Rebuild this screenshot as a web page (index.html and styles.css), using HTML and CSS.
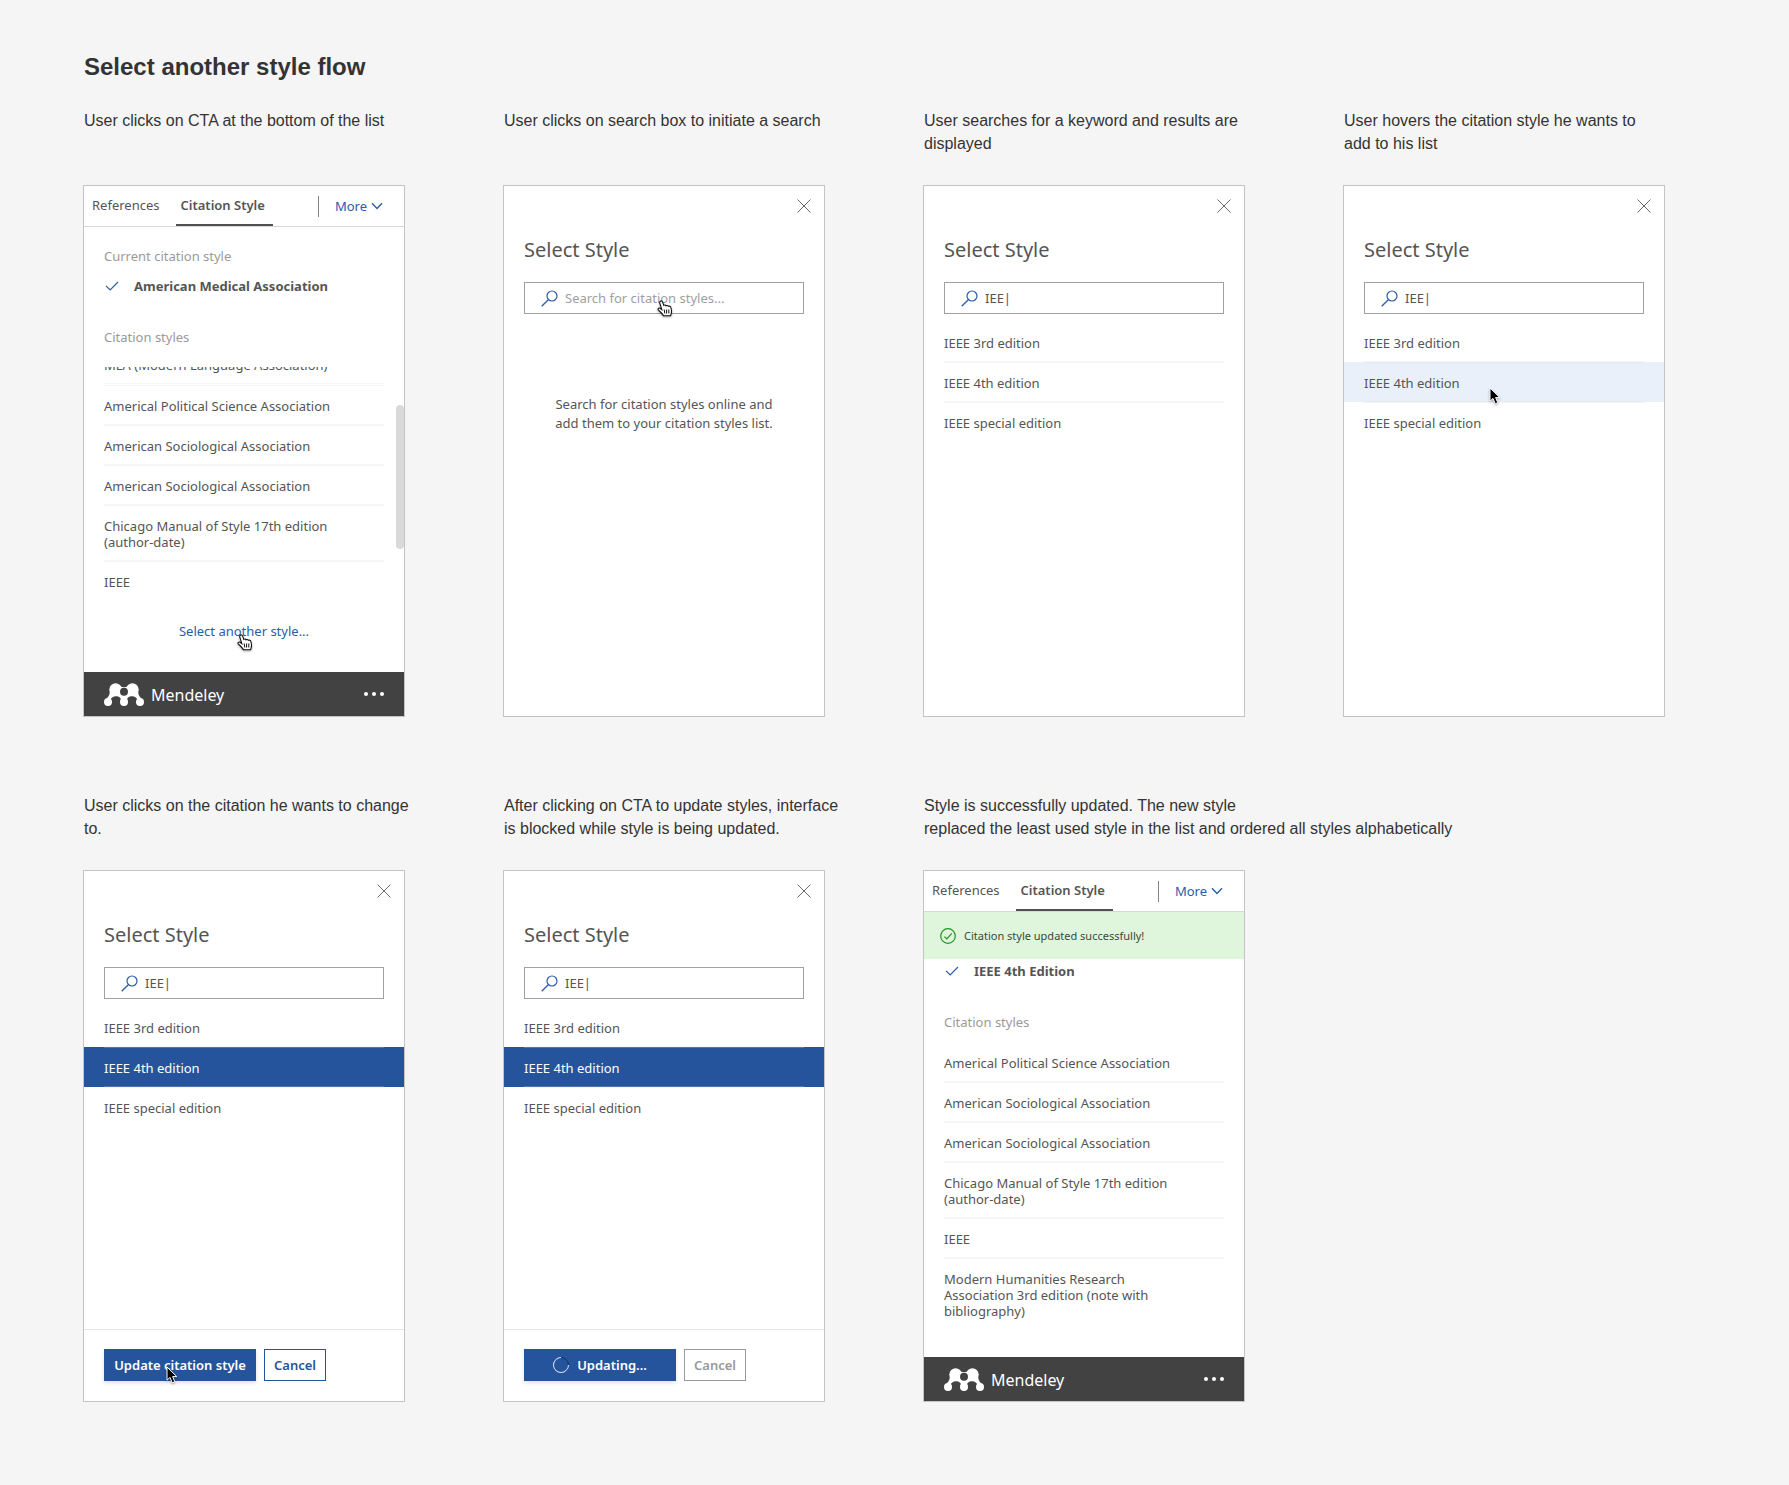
FILE: index.html
```html
<!DOCTYPE html>
<html lang="en">
<head>
<meta charset="utf-8">
<meta name="viewport" content="width=device-width, initial-scale=1">
<title>Select another style flow</title>
<link rel="stylesheet" href="styles.css">
</head>
<body>
<svg class="sprite" aria-hidden="true">
  <symbol id="i-close" viewBox="0 0 14 14"><path d="M0.5 0.5L13.5 13.5M13.5 0.5L0.5 13.5" fill="none" stroke="#6b6b6b"/></symbol>
  <symbol id="i-search" viewBox="0 0 17 17"><circle cx="11" cy="6" r="5" fill="none" stroke="#2a5caa" stroke-width="1.2"/><path d="M7.3 9.7L0.7 16.2" fill="none" stroke="#2a5caa" stroke-width="1.3"/></symbol>
  <symbol id="i-check" viewBox="0 0 14 10"><path d="M1 4.8L5.2 9L13 1" fill="none" stroke="#2a5caa" stroke-width="1.2"/></symbol>
  <symbol id="i-chevron" viewBox="0 0 12 8"><path d="M1 1.2L6 6.4L11 1.2" fill="none" stroke="#2a5caa" stroke-width="1.4"/></symbol>
  <symbol id="i-success" viewBox="0 0 16 16"><circle cx="8" cy="8" r="7.3" fill="none" stroke="#1f9522" stroke-width="1.2"/><path d="M4.4 8.6L6.8 10.8L11.8 5.4" fill="none" stroke="#1f9522" stroke-width="1.2"/></symbol>
  <symbol id="i-dots" viewBox="0 0 20 4"><g fill="#fff"><circle cx="2" cy="2" r="2"/><circle cx="10" cy="2" r="2"/><circle cx="18" cy="2" r="2"/></g></symbol>
  <symbol id="i-logo" viewBox="0 0 40 23">
    <g fill="#fff">
      <circle cx="11.6" cy="6.4" r="6.2"/><circle cx="28.4" cy="6.4" r="6.2"/>
      <circle cx="4" cy="19" r="4"/><circle cx="20" cy="19" r="4"/><circle cx="36" cy="19" r="4"/>
      <path d="M5.6 6C6.4 10.5 5 13.5 2.6 15.4L6.6 16.8C7.4 14.4 9.4 13.2 11.8 13.2C15.2 13.2 17.6 14.8 16.6 18L23.4 18C22.4 14.8 24.8 13.2 28.2 13.2C30.6 13.2 32.6 14.4 33.4 16.8L37.4 15.4C35 13.5 33.6 10.5 34.4 6L26 2.4Q20 6 14 2.4Z"/>
    </g>
    <circle cx="20" cy="8.8" r="4" fill="#424242"/>
  </symbol>
  <symbol id="i-arrow" viewBox="0 0 12 18"><path d="M1 1V14.2L4 11.4L6.2 16.8L8.8 15.7L6.6 10.6H10.8Z" fill="#000" stroke="#fff"/></symbol>
  <symbol id="i-hand" viewBox="0 0 16 17"><path d="M3.4 1.2C4.2 0.6 5.2 1 5.5 1.9L6.8 5.4C7.6 4.8 8.6 5 9 5.8C9.8 5.2 10.9 5.4 11.3 6.3C12.3 5.8 13.5 6.2 13.8 7.4C14.5 9.6 15 11.2 14.2 13.4L13.6 15.8H6.4C5.6 13.6 3 11.8 1.3 9.8C0.4 8.6 1.8 7.5 3 8.3L4.8 9.6L2.8 3.2C2.5 2.3 2.7 1.6 3.4 1.2Z" fill="#fff" stroke="#111" stroke-width="1.1"/><path d="M7.2 9.5L7.8 13.5M9.6 9.5V13.5M11.8 9.5V13.5" stroke="#111" fill="none"/></symbol>
</svg>

<main class="board">
  <h1>Select another style flow</h1>
  <div class="flow">

    <section class="step">
      <p class="caption">User clicks on CTA at the bottom of the list</p>
      <div class="card">
        <nav class="tabs">
          <a class="tab" href="#">References</a>
          <a class="tab active" href="#">Citation Style</a>
          <button class="more" type="button">More <svg width="12" height="8"><use href="#i-chevron"/></svg></button>
        </nav>
        <div class="panel">
          <h2 class="label">Current citation style</h2>
          <p class="current"><svg width="14" height="10"><use href="#i-check"/></svg>American Medical Association</p>
          <h2 class="label">Citation styles</h2>
        </div>
        <ul class="styles scrolled">
          <li><button type="button"><span>MLA (Modern Language Association)</span></button></li>
          <li><button type="button"><span>Americal Political Science Association</span></button></li>
          <li><button type="button"><span>American Sociological Association</span></button></li>
          <li><button type="button"><span>American Sociological Association</span></button></li>
          <li><button type="button"><span>Chicago Manual of Style 17th edition (author-date)</span></button></li>
          <li><button type="button"><span>IEEE</span></button></li>
        </ul>
        <div class="cta"><a href="#">Select another style...</a><svg class="pointer on-link" width="16" height="17"><use href="#i-hand"/></svg></div>
        <div class="scrollbar"></div>
        <footer class="brand"><svg width="40" height="23"><use href="#i-logo"/></svg><span>Mendeley</span><button type="button" aria-label="Menu"><svg width="20" height="4"><use href="#i-dots"/></svg></button></footer>
      </div>
    </section>

    <section class="step">
      <p class="caption">User clicks on search box to initiate a search</p>
      <div class="card">
        <button class="close" type="button" aria-label="Close"><svg width="14" height="14"><use href="#i-close"/></svg></button>
        <h2 class="title">Select Style</h2>
        <label class="search"><svg width="17" height="17"><use href="#i-search"/></svg><input type="text" aria-label="Search" placeholder="Search for citation styles..."><svg class="pointer on-search" width="16" height="17"><use href="#i-hand"/></svg></label>
        <p class="empty">Search for citation styles online and<br>add them to your citation styles list.</p>
      </div>
    </section>

    <section class="step">
      <p class="caption">User searches for a keyword and results are<br>displayed</p>
      <div class="card">
        <button class="close" type="button" aria-label="Close"><svg width="14" height="14"><use href="#i-close"/></svg></button>
        <h2 class="title">Select Style</h2>
        <label class="search"><svg width="17" height="17"><use href="#i-search"/></svg><input type="text" aria-label="Search" value="IEE|"></label>
        <ul class="styles results">
          <li><button type="button"><span>IEEE 3rd edition</span></button></li>
          <li><button type="button"><span>IEEE 4th edition</span></button></li>
          <li><button type="button"><span>IEEE special edition</span></button></li>
        </ul>
      </div>
    </section>

    <section class="step">
      <p class="caption">User hovers the citation style he wants to<br>add to his list</p>
      <div class="card">
        <button class="close" type="button" aria-label="Close"><svg width="14" height="14"><use href="#i-close"/></svg></button>
        <h2 class="title">Select Style</h2>
        <label class="search"><svg width="17" height="17"><use href="#i-search"/></svg><input type="text" aria-label="Search" value="IEE|"></label>
        <ul class="styles results">
          <li><button type="button"><span>IEEE 3rd edition</span></button></li>
          <li class="hovered"><button type="button"><span>IEEE 4th edition</span></button><svg class="pointer on-row" width="12" height="18"><use href="#i-arrow"/></svg></li>
          <li><button type="button"><span>IEEE special edition</span></button></li>
        </ul>
      </div>
    </section>

    <section class="step">
      <p class="caption">User clicks on the citation he wants to change<br>to.</p>
      <div class="card">
        <button class="close" type="button" aria-label="Close"><svg width="14" height="14"><use href="#i-close"/></svg></button>
        <h2 class="title">Select Style</h2>
        <label class="search"><svg width="17" height="17"><use href="#i-search"/></svg><input type="text" aria-label="Search" value="IEE|"></label>
        <ul class="styles results">
          <li><button type="button"><span>IEEE 3rd edition</span></button></li>
          <li class="selected"><button type="button"><span>IEEE 4th edition</span></button></li>
          <li><button type="button"><span>IEEE special edition</span></button></li>
        </ul>
        <footer class="actions">
          <button class="primary" type="button">Update citation style<svg class="pointer on-button" width="12" height="18"><use href="#i-arrow"/></svg></button>
          <button class="secondary" type="button">Cancel</button>
        </footer>
      </div>
    </section>

    <section class="step">
      <p class="caption">After clicking on CTA to update styles, interface<br>is blocked while style is being updated.</p>
      <div class="card">
        <button class="close" type="button" aria-label="Close"><svg width="14" height="14"><use href="#i-close"/></svg></button>
        <h2 class="title">Select Style</h2>
        <label class="search"><svg width="17" height="17"><use href="#i-search"/></svg><input type="text" aria-label="Search" value="IEE|"></label>
        <ul class="styles results">
          <li><button type="button"><span>IEEE 3rd edition</span></button></li>
          <li class="selected"><button type="button"><span>IEEE 4th edition</span></button></li>
          <li><button type="button"><span>IEEE special edition</span></button></li>
        </ul>
        <footer class="actions">
          <button class="primary" type="button"><i class="spinner"></i>Updating...</button>
          <button class="secondary" type="button" disabled>Cancel</button>
        </footer>
      </div>
    </section>

    <section class="step">
      <p class="caption">Style is successfully updated. The new style<br>replaced the least used style in the list and ordered all styles alphabetically</p>
      <div class="card">
        <nav class="tabs">
          <a class="tab" href="#">References</a>
          <a class="tab active" href="#">Citation Style</a>
          <button class="more" type="button">More <svg width="12" height="8"><use href="#i-chevron"/></svg></button>
        </nav>
        <div class="panel">
          <p class="banner" role="status"><svg width="16" height="16"><use href="#i-success"/></svg>Citation style updated successfully!</p>
          <p class="current"><svg width="14" height="10"><use href="#i-check"/></svg>IEEE 4th Edition</p>
          <h2 class="label">Citation styles</h2>
        </div>
        <ul class="styles top">
          <li><button type="button"><span>Americal Political Science Association</span></button></li>
          <li><button type="button"><span>American Sociological Association</span></button></li>
          <li><button type="button"><span>American Sociological Association</span></button></li>
          <li><button type="button"><span>Chicago Manual of Style 17th edition (author-date)</span></button></li>
          <li><button type="button"><span>IEEE</span></button></li>
          <li><button type="button"><span>Modern Humanities Research<br>Association 3rd edition (note with bibliography)</span></button></li>
        </ul>
        <footer class="brand"><svg width="40" height="23"><use href="#i-logo"/></svg><span>Mendeley</span><button type="button" aria-label="Menu"><svg width="20" height="4"><use href="#i-dots"/></svg></button></footer>
      </div>
    </section>

  </div>
</main>
</body>
</html>
```
FILE: styles.css
```css
* { box-sizing: border-box; }

body {
  margin: 0;
  background: #f5f5f5;
  color: #333;
  font: 13px/16px "Noto Sans", "Open Sans", sans-serif;
}

h1, h2, p, ul { margin: 0; padding: 0; font-weight: 400; }
ul { list-style: none; }
svg { display: block; flex: none; }
a { text-decoration: none; }
button { margin: 0; padding: 0; border: 0; background: none; color: inherit; font: inherit; cursor: pointer; }
.sprite { position: absolute; width: 0; height: 0; }

.board { padding: 52px 124px 84px 83px; }

h1 { margin-bottom: 27px; padding-left: 1px; font: 700 24px/30px "Liberation Sans", Arial, sans-serif; }

.flow { display: grid; grid-template-columns: repeat(4, minmax(0, 1fr)); gap: 77px 98px; }

.step { display: flex; flex-direction: column; gap: 30px; }

.caption {
  min-height: 46px;
  padding-left: 1px;
  font: 16px/23px "Liberation Sans", Arial, sans-serif;
  white-space: nowrap;
}

.card {
  position: relative;
  display: flex;
  flex-direction: column;
  min-height: 532px;
  border: 1px solid #c4c4c4;
  background: #fff;
  color: #555;
}

/* Tab bar */
.tabs { display: flex; align-items: center; height: 41px; padding-right: 18px; border-bottom: 1px solid #d8d8d8; }
.tab { padding: 1px 8px 0; line-height: 37px; color: #555; border-bottom: 2px solid transparent; }
.tab.active { margin-left: 8px; padding: 1px 8px 0 5px; font-weight: 600; border-bottom-color: #505050; }
.more {
  display: flex;
  align-items: center;
  gap: 4px;
  height: 21px;
  margin-left: auto;
  padding: 0 3px 0 16px;
  border-left: 1px solid #868686;
  color: #2a5caa;
}

/* Current style */
.panel { padding: 21px 20px 0; }
.label { font-size: 13px; line-height: 16px; color: #9a9a9a; }
.current { display: flex; align-items: center; gap: 15px; padding: 14px 1px 35px; font-weight: 700; }
.banner {
  display: flex;
  align-items: center;
  gap: 8px;
  height: 47px;
  margin: -21px -20px 0;
  padding: 0 16px;
  background: #dff5dc;
  color: #3a4a3a;
  font-size: 11px;
}
.banner + .current { padding-top: 4px; }

/* Lists of styles */
.styles { overflow: hidden; margin-top: 22px; }
.styles.scrolled > :first-child { margin-top: -23px; }
.styles.scrolled > :nth-child(2) { padding-top: 1px; }
.styles.top { margin-top: 12px; }
.styles.results { margin-top: 8px; overflow: visible; }
.styles li { position: relative; }
.styles button { display: block; width: 100%; padding: 0 20px; text-align: left; }
.styles span { display: block; padding: 12px 20px 10px 0; border: 1px solid #f6f6f6; border-width: 1px 0; }
.styles li:first-child span { border-top-color: transparent; }
.styles li:last-child span { border-bottom-color: transparent; }
.styles .hovered { background: #e9f0fa; }
.styles .hovered span { border-color: #e6eaf0; }
.styles .selected { background: #25549c; color: #fff; }
.styles .selected span { border-color: #5177b0; }

.cta { position: relative; margin-top: 22px; text-align: center; }
.cta a { color: #2a5caa; }

.scrollbar { position: absolute; top: 219px; right: 0; width: 8px; height: 144px; border-radius: 4px; background: #dadada; }

.brand {
  display: flex;
  align-items: center;
  gap: 7px;
  height: 44px;
  margin-top: auto;
  padding: 0 20px;
  background: #424242;
  color: #fff;
  font-size: 16px;
}
.brand span { padding-top: 2px; }
.brand button { margin-left: auto; }

/* Search pane */
.close { align-self: flex-end; margin: 13px 13px 0 0; }
.title { margin: 24px 20px 19px; font-size: 20px; line-height: 26px; }
.search {
  position: relative;
  display: flex;
  align-items: center;
  gap: 7px;
  height: 32px;
  margin: 0 20px;
  padding: 0 16px;
  border: 1px solid #a0a0a0;
}
.search input { flex: 1; min-width: 0; padding: 0; border: 0; outline: 0; background: none; color: #555; font: inherit; }
.search input::placeholder { color: #a0a0a0; opacity: 1; }
.empty { margin-top: 81px; line-height: 19px; text-align: center; }

/* Action bar */
.actions { display: flex; gap: 8px; margin-top: auto; padding: 19px 20px 20px; border-top: 1px solid #e6e6e6; }
.actions button {
  position: relative;
  display: flex;
  align-items: center;
  justify-content: center;
  gap: 8px;
  height: 32px;
  font-weight: 600;
}
.actions .primary { width: 152px; background: #25549c; color: #fff; box-shadow: 0 2px 4px rgba(0, 0, 0, .12); }
.actions .secondary { width: 62px; border: 1px solid #25549c; color: #25549c; }
.actions .secondary:disabled { border-color: #999; color: #999; }
.spinner { width: 16px; height: 16px; border: 1px solid #d5e0f0; border-top-color: #0f3470; border-radius: 50%; transform: rotate(45deg); }

/* Mouse pointers laid over the screens */
.pointer { position: absolute; z-index: 1; filter: drop-shadow(0 1px 1px rgba(0, 0, 0, .35)); }
.on-link { left: 153px; top: 11px; }
.on-search { left: 132px; top: 17px; }
.on-row { left: 145px; top: 25px; }
.on-button { left: 62px; top: 17px; }
```
